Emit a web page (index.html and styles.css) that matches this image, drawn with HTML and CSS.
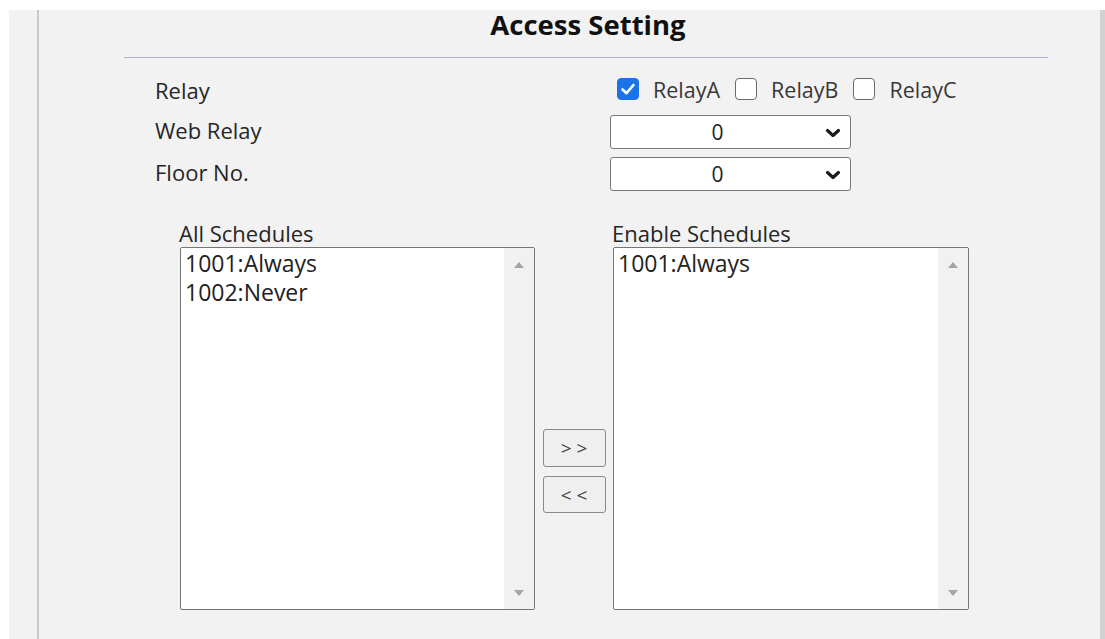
FILE: index.html
```html
<!DOCTYPE html>
<html lang="en">
<head>
<meta charset="utf-8">
<title>Access Setting</title>
<link rel="stylesheet" href="styles.css">
</head>
<body>
<div class="frame">
  <div class="gutter"></div>
  <main class="main">
    <section class="panel">
      <h2 class="panel-title">Access Setting</h2>

      <div class="form">
        <div class="row row-relay">
          <span class="label">Relay</span>
          <div class="relays">
            <label class="check">
              <span class="box is-checked">
                <svg viewBox="0 0 22 22" width="22" height="22"><path d="M5.5 11.5 L9.5 15.2 L16.5 7" fill="none" stroke="#fff" stroke-width="2.6" stroke-linecap="round" stroke-linejoin="round"/></svg>
              </span>
              <span class="check-text">RelayA</span>
            </label>
            <label class="check">
              <span class="box"></span>
              <span class="check-text">RelayB</span>
            </label>
            <label class="check">
              <span class="box"></span>
              <span class="check-text">RelayC</span>
            </label>
          </div>
        </div>

        <div class="row">
          <span class="label">Web Relay</span>
          <div class="select">
            <span class="select-value">0</span>
            <svg class="chevron" viewBox="0 0 16 10" width="16" height="10"><path d="M2.5 2.5 L8 7.5 L13.5 2.5" fill="none" stroke="#1a1a1a" stroke-width="3.2" stroke-linecap="round" stroke-linejoin="round"/></svg>
          </div>
        </div>

        <div class="row">
          <span class="label">Floor No.</span>
          <div class="select">
            <span class="select-value">0</span>
            <svg class="chevron" viewBox="0 0 16 10" width="16" height="10"><path d="M2.5 2.5 L8 7.5 L13.5 2.5" fill="none" stroke="#1a1a1a" stroke-width="3.2" stroke-linecap="round" stroke-linejoin="round"/></svg>
          </div>
        </div>
      </div>

      <div class="schedules">
        <div class="list-col">
          <div class="list-title">All Schedules</div>
          <div class="listbox">
            <ul class="items">
              <li>1001:Always</li>
              <li>1002:Never</li>
            </ul>
            <div class="scrolltrack">
              <span class="arrow arrow-up"></span>
              <span class="arrow arrow-down"></span>
            </div>
          </div>
        </div>

        <div class="move">
          <button class="move-btn" type="button">&gt;&gt;</button>
          <button class="move-btn" type="button">&lt;&lt;</button>
        </div>

        <div class="list-col list-col-right">
          <div class="list-title">Enable Schedules</div>
          <div class="listbox">
            <ul class="items">
              <li>1001:Always</li>
            </ul>
            <div class="scrolltrack">
              <span class="arrow arrow-up"></span>
              <span class="arrow arrow-down"></span>
            </div>
          </div>
        </div>
      </div>
    </section>
  </main>
  <div class="edge"></div>
</div>
</body>
</html>
```

FILE: styles.css
```css
html, body {
  margin: 0;
  padding: 0;
  background: #ffffff;
}

body {
  font-family: "Open Sans", "Noto Sans", sans-serif;
  color: #2a2a2a;
}

/* page frame: white margin on top/left, grey work area */
.frame {
  margin: 10px 0 0 9px;
  height: 629px;
  background: #f2f2f2;
  display: flex;
}

.gutter {
  width: 28px;
  flex: none;
  border-right: 2px solid #c9c9c9;
}

.main {
  flex: 1;
  min-width: 0;
}

.edge {
  width: 5px;
  flex: none;
  background: #d2d2d2;
}

.panel {
  margin-left: 85px;
  width: 924px;
}

.panel-title {
  margin: 0;
  height: 48px;
  box-sizing: border-box;
  border-bottom: 1px solid #aab0cb;
  text-align: center;
  font-size: 27.5px;
  font-weight: 700;
  line-height: 30px;
  color: #111111;
  padding-left: 4px;
}

/* label / control rows */
.form {
  padding-left: 31px;
  margin-top: 17px;
  display: flex;
  flex-direction: column;
  gap: 8px;
}

.row {
  display: flex;
  align-items: flex-start;
  height: 34px;
}

.row-relay {
  height: 32px;
}

.label {
  width: 455px;
  flex: none;
  font-size: 22px;
  line-height: 30px;
  color: #262626;
}

.relays {
  display: flex;
  align-items: flex-start;
}

.check {
  display: flex;
  align-items: flex-start;
  margin-left: 7px;
  margin-right: 8px;
}

.box {
  width: 20px;
  height: 20px;
  margin-top: 3px;
  border: 1px solid #6a6a6a;
  border-radius: 4px;
  background: #ffffff;
  display: block;
}

.box svg {
  display: block;
  margin: -1px;
}

.box.is-checked {
  border-color: #1a73e8;
  background: #1a73e8;
}

.check-text {
  margin-left: 14px;
  font-size: 21.5px;
  line-height: 30px;
  color: #383838;
}

.select {
  width: 241px;
  height: 34px;
  box-sizing: border-box;
  border: 1px solid #777777;
  border-radius: 3px;
  background: #ffffff;
  display: flex;
  align-items: center;
}

.select-value {
  flex: 1;
  text-align: center;
  font-size: 21px;
  line-height: 30px;
  color: #222222;
  padding-left: 4px;
}

.chevron {
  display: block;
  margin: 1px 9px 0 5px;
}

/* schedule pickers */
.schedules {
  margin-top: 30px;
  margin-left: 56px;
  display: flex;
  align-items: flex-start;
}

.list-col {
  width: 355px;
  flex: none;
}

.list-col-right {
  width: 356px;
}

.list-title {
  font-size: 22px;
  line-height: 24px;
  margin-bottom: 2px;
  color: #262626;
  margin-left: -1px;
}

.listbox {
  height: 363px;
  box-sizing: border-box;
  border: 1px solid #767676;
  border-radius: 2px;
  background: #ffffff;
  display: flex;
}

.items {
  flex: 1;
  list-style: none;
  margin: 0;
  padding: 1px 0 0 4px;
  font-size: 23px;
  line-height: 29px;
  color: #222222;
}

.scrolltrack {
  width: 30px;
  flex: none;
  background: #f1f1f1;
  display: flex;
  flex-direction: column;
  justify-content: space-between;
  align-items: center;
  padding: 14px 0 13px;
}

.arrow {
  width: 0;
  height: 0;
  border-left: 5px solid transparent;
  border-right: 5px solid transparent;
}

.arrow-up {
  border-bottom: 6px solid #a5a5a5;
}

.arrow-down {
  border-top: 6px solid #a5a5a5;
}

.move {
  width: 78px;
  flex: none;
  margin-top: 208px;
  display: flex;
  flex-direction: column;
  align-items: center;
  gap: 9px;
}

.move-btn {
  width: 63px;
  height: 38px;
  box-sizing: border-box;
  border: 1px solid #8a8a8a;
  border-radius: 3px;
  background: #efefef;
  font-family: "Open Sans", sans-serif;
  font-size: 19px;
  font-weight: 400;
  letter-spacing: 5px;
  text-indent: 5px;
  color: #3a3a3a;
  padding: 0;
}

.move-btn + .move-btn {
  height: 37px;
}
```
